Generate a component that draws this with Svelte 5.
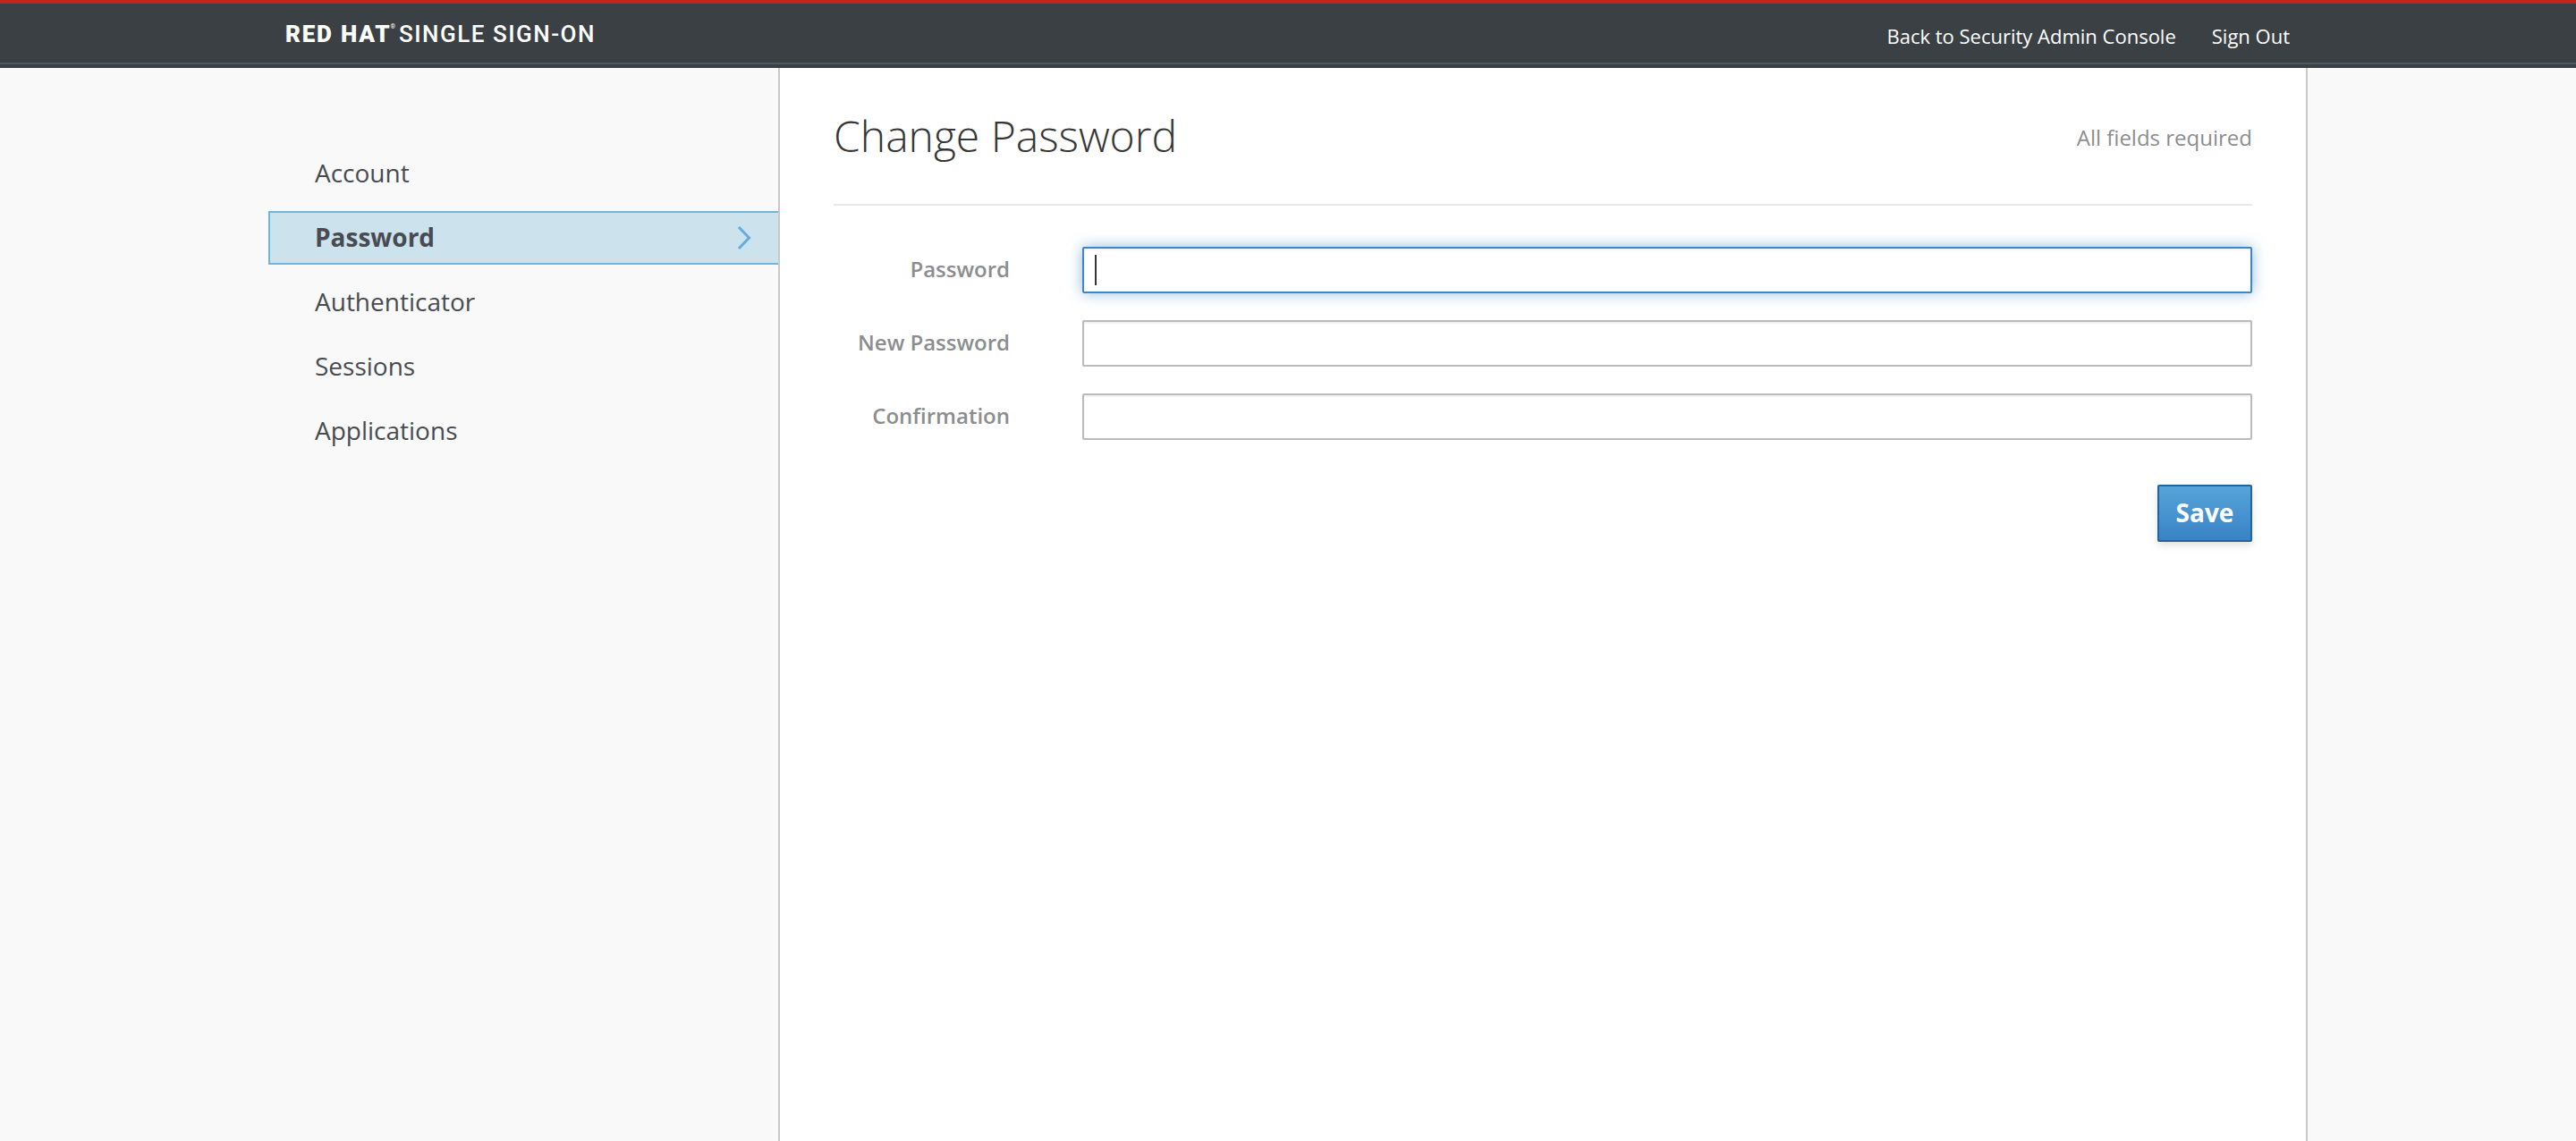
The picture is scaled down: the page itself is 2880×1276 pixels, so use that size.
<script>
  const links = [
    { label: "Account" },
    { label: "Password", active: true },
    { label: "Authenticator" },
    { label: "Sessions" },
    { label: "Applications" },
  ];

  const fields = [
    { id: "password", label: "Password", focused: true },
    { id: "password-new", label: "New Password" },
    { id: "password-confirm", label: "Confirmation" },
  ];
</script>

<header class="navbar">
  <div class="brand">
    <b>RED HAT</b><sup>®</sup><span>SINGLE SIGN-ON</span>
  </div>
  <nav class="utility">
    <a href="#back">Back to Security Admin Console</a>
    <a href="#out">Sign Out</a>
  </nav>
</header>

<div class="page">
  <aside class="sidebar">
    <ul>
      {#each links as link}
        <li class:active={link.active}>
          <a href="#{link.label}">{link.label}</a>
          {#if link.active}
            <svg class="chevron" viewBox="0 0 16 28" width="16" height="28" aria-hidden="true">
              <path d="M2 2 L13.5 14 L2 26" fill="none" stroke="#62aede" stroke-width="3" />
            </svg>
          {/if}
        </li>
      {/each}
    </ul>
  </aside>

  <main class="content">
    <div class="title-row">
      <h2>Change Password</h2>
      <span class="required">All fields required</span>
    </div>

    <form>
      {#each fields as field}
        <div class="row">
          <label for={field.id}>{field.label}</label>
          <div class="control">
            <input id={field.id} type="password" class:focused={field.focused} />
            {#if field.focused}
              <span class="caret"></span>
            {/if}
          </div>
        </div>
      {/each}
      <div class="actions">
        <button type="button">Save</button>
      </div>
    </form>
  </main>
</div>

<style>
  :global(body) {
    margin: 0;
    background: #f9f9f9;
    font-family: "Open Sans", "Noto Sans", sans-serif;
    color: #363636;
  }

  .navbar {
    box-sizing: border-box;
    height: 76px;
    display: flex;
    align-items: center;
    justify-content: space-between;
    padding: 0 320px 0 319px;
    background: #3b4044;
    border-top: 4px solid #c0261c;
    box-shadow: inset 0 -4px 0 #3b4044, inset 0 -6px 0 #53575c;
  }

  .brand {
    display: flex;
    align-items: baseline;
    margin-top: -5px;
    color: #fff;
    font-family: "Roboto", sans-serif;
    font-size: 26px;
    line-height: 30px;
  }

  .brand b {
    font-weight: 900;
    letter-spacing: 1.8px;
  }

  .brand sup {
    align-self: flex-start;
    margin: 0 4px 0 -1px;
    font-size: 7px;
    line-height: 14px;
  }

  .brand span {
    font-weight: 500;
    letter-spacing: 1.5px;
  }

  .utility {
    display: flex;
    gap: 40px;
    margin-top: -1px;
  }

  .utility a {
    color: #fff;
    font-size: 22px;
    line-height: 32px;
    text-decoration: none;
  }

  .page {
    display: flex;
    min-height: 1200px;
    padding-left: 300px;
  }

  .sidebar {
    width: 570px;
    padding-top: 88px;
  }

  ul {
    list-style: none;
    margin: 0;
    padding: 0;
    display: flex;
    flex-direction: column;
    gap: 12px;
  }

  li {
    box-sizing: border-box;
    height: 60px;
    display: flex;
    align-items: center;
    justify-content: space-between;
    padding: 0 30px 3px 50px;
    border: 2px solid transparent;
    border-right: 0;
  }

  li a {
    color: #484c52;
    font-size: 28px;
    text-decoration: none;
  }

  li.active {
    background: #cce2ed;
    border-color: #6db6dd;
  }

  li.active a {
    font-weight: 700;
  }

  .chevron {
    margin-top: 3px;
  }

  .content {
    box-sizing: border-box;
    width: 1710px;
    height: 1200px;
    padding: 0 60px 0 60px;
    background: #fff;
    border-left: 2px solid #c8c8c8;
    border-right: 2px solid #c8c8c8;
  }

  .title-row {
    box-sizing: border-box;
    height: 154px;
    display: flex;
    align-items: center;
    justify-content: space-between;
    border-bottom: 2px solid #e9e9e9;
  }

  h2 {
    margin: 0;
    font-size: 48px;
    font-weight: 300;
    line-height: 60px;
    color: #363636;
  }

  .required {
    margin-top: 3px;
    color: #8b8d8f;
    font-size: 24px;
  }

  form {
    padding-top: 46px;
  }

  .row {
    display: flex;
    align-items: center;
    margin-bottom: 30px;
  }

  label {
    width: 197px;
    margin-top: -3px;
    text-align: right;
    color: #8b8d8f;
    font-size: 24px;
    font-weight: 600;
    white-space: nowrap;
  }

  .control {
    position: relative;
    flex: 1;
    margin-left: 81px;
  }

  input {
    display: block;
    box-sizing: border-box;
    width: 100%;
    height: 52px;
    margin: 0;
    padding: 0 12px;
    background: #fff;
    border: 2px solid #bbbbbb;
    border-radius: 2px;
    outline: none;
    box-shadow: inset 0 2px 2px rgba(3, 3, 3, 0.06);
  }

  input.focused {
    border-color: #3b87c9;
    box-shadow: inset 0 2px 2px rgba(3, 3, 3, 0.05), 0 0 16px rgba(59, 135, 201, 0.55);
  }

  .caret {
    position: absolute;
    left: 14px;
    top: 9px;
    width: 2px;
    height: 34px;
    background: #363636;
  }

  .actions {
    display: flex;
    justify-content: flex-end;
    padding-top: 20px;
  }

  button {
    box-sizing: border-box;
    width: 106px;
    height: 64px;
    padding: 0 0 3px;
    color: #fff;
    font-family: inherit;
    font-size: 28px;
    font-weight: 700;
    background: linear-gradient(to bottom, #57a4da, #3982c6);
    border: 2px solid #26629c;
    border-radius: 2px;
    box-shadow: 0 4px 8px rgba(3, 3, 3, 0.12);
  }
</style>
